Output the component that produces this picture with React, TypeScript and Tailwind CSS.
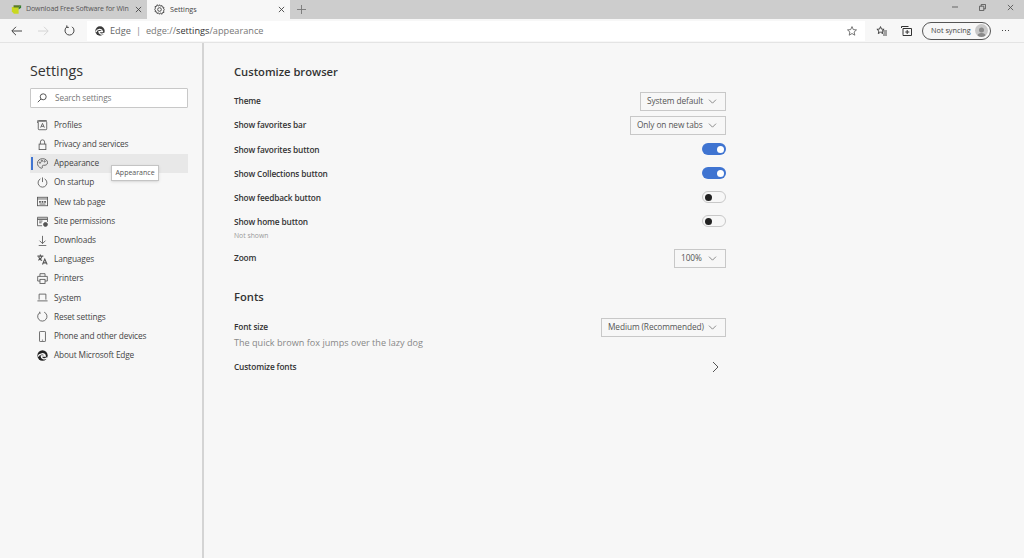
import React from "react";

const S = { fill: "none", stroke: "currentColor", strokeWidth: 1, width: 11, height: 11 } as const;

function EdgeLogo({ size = 11, color = "#3a3a3a", gap = "#ffffff" }: { size?: number; color?: string; gap?: string }) {
  return (
    <svg width={size} height={size} viewBox="0 0 16 16">
      <circle cx="8" cy="8" r="7.500" fill={color} />
      <path
        d="M1.500 9.500C3 5 11 3.800 12 8.800H6.300C6 12.500 10.500 14.200 15 11.500"
        fill="none"
        stroke={gap}
        strokeWidth="2"
      />
    </svg>
  );
}

const navIcons: Record<string, React.ReactNode> = {
  Profiles: (
    <svg viewBox="0 0 13 13" {...S}>
      <rect x="1.500" y="1.500" width="10" height="10" rx="1" />
      <path d="M.5 3.500v-2a1 1 0 0 1 1-1h10" />
      <path d="M4.300 9 6.500 4l2.200 5M5 7.500h3" />
    </svg>
  ),
  "Privacy and services": (
    <svg viewBox="0 0 13 13" {...S}>
      <rect x="2.500" y="6" width="8" height="6.500" />
      <path d="M4 6V3.500a2.500 2.500 0 0 1 5 0V6" />
    </svg>
  ),
  Appearance: (
    <svg viewBox="0 0 13 13" {...S}>
      <path d="M6.500.8C3 .8.500 3.200.500 6.300c0 2.700 2 4.900 4.400 5.700 1.200.4 1.700-.4 1.400-1.500-.3-1.200.3-2 1.500-1.900 2.200.2 4.700-.6 4.700-3C12.500 2.600 9.800.8 6.500.8Z" />
      <circle cx="3.500" cy="5.500" r=".8" />
      <circle cx="5.800" cy="3.300" r=".8" />
      <circle cx="9" cy="4" r=".8" />
    </svg>
  ),
  "On startup": (
    <svg viewBox="0 0 13 13" {...S}>
      <path d="M4 2.200a5.200 5.200 0 1 0 5 0M6.500 .5v5.500" />
    </svg>
  ),
  "New tab page": (
    <svg viewBox="0 0 13 13" {...S}>
      <rect x=".5" y="1.500" width="12" height="10" />
      <path d="M.5 3.500h12" />
      <path d="M2.500 7h2M5.500 7h2M8.500 7h2" strokeWidth="2" />
      <path d="M3 9.500h7" />
    </svg>
  ),
  "Site permissions": (
    <svg viewBox="0 0 13 13" {...S}>
      <path d="M6 11.500H.5v-10h12V7" />
      <path d="M.5 3.800h12" strokeWidth="1.500" />
      <path d="M2.500 6h4M2.500 8h3" />
      <circle cx="10" cy="10" r="2.300" fill="currentColor" />
    </svg>
  ),
  Downloads: (
    <svg viewBox="0 0 13 13" {...S}>
      <path d="M6.500 1v9M3 6.700l3.500 3.500L10 6.700M2 12.500h9" />
    </svg>
  ),
  Languages: (
    <svg viewBox="0 0 13 13" {...S}>
      <path d="M.5 2.500h7M4 .5v2M1.500 7.500C4 6.500 5.500 4.500 6 2.500M2 3.500c.7 2 2 3.500 4 4.300" strokeWidth="1.300" />
      <path d="M6.500 12.500 9.200 6l2.800 6.500M7.500 10.500h3.500" strokeWidth="1.300" />
    </svg>
  ),
  Printers: (
    <svg viewBox="0 0 13 13" {...S}>
      <path d="M3.500 4V.8h6V4M3.500 9.500H.8V4h11.400v5.500H9.500" />
      <rect x="3.500" y="7.500" width="6" height="4.800" />
    </svg>
  ),
  System: (
    <svg viewBox="0 0 13 13" {...S}>
      <path d="M2.500 9V2.500h8V9M.5 10.500h12" />
    </svg>
  ),
  "Reset settings": (
    <svg viewBox="0 0 13 13" {...S}>
      <path d="M8.500 1.400a5.500 5.500 0 1 1-5 .3M3.300.8l.3 2.800" />
    </svg>
  ),
  "Phone and other devices": (
    <svg viewBox="0 0 13 13" {...S}>
      <rect x="3" y=".5" width="7" height="12" rx=".8" />
      <path d="M5.800 10.800h1.400" />
    </svg>
  ),
  "About Microsoft Edge": <EdgeLogo size={11} color="#222" gap="#f7f7f7" />,
};

const navItems = Object.keys(navIcons);

function Chevron() {
  return (
    <svg width="9" height="5" viewBox="0 0 10 6" fill="none" stroke="#777" strokeWidth="1">
      <path d="M.8.800 5 5l4.200-4.200" />
    </svg>
  );
}

function Select({ label, width }: { label: string; width: string }) {
  return (
    <div
      className={`flex h-[19px] items-center justify-between border border-[#c8c8c8] pl-[6px] pr-[8px] text-[8.300px] font-normal tracking-[-0.1px] text-[#555] ${width}`}
    >
      <span>{label}</span>
      <Chevron />
    </div>
  );
}

function Toggle({ on }: { on?: boolean }) {
  return on ? (
    <div className="flex h-3 w-6 items-center justify-end rounded-full bg-[#3f74d1] pr-[2px]">
      <div className="h-[7px] w-[7px] rounded-full bg-white" />
    </div>
  ) : (
    <div className="flex h-3 w-6 items-center rounded-full border border-[#c8c8c8] pl-[2px]">
      <div className="h-[7px] w-[7px] rounded-full bg-[#222]" />
    </div>
  );
}

function Row({
  label,
  children,
  className = "h-6",
  labelClass = "pt-[2px]",
}: {
  label: string;
  children?: React.ReactNode;
  className?: string;
  labelClass?: string;
}) {
  return (
    <div className={`flex items-center justify-between text-[8.300px] font-semibold tracking-[-0.15px] text-[#333] ${className}`}>
      <span className={labelClass}>{label}</span>
      {children}
    </div>
  );
}

export default function App() {
  return (
    <div
      className="flex h-[558px] w-[1024px] flex-col overflow-hidden bg-[#f7f7f7] text-[#333]"
      style={{ fontFamily: '"Open Sans", "Noto Sans", sans-serif' }}
    >
      {/* Tab strip */}
      <div className="flex h-[19px] items-stretch bg-[#cdcdcd] pl-[4px]">
        <div className="flex w-[143px] items-center pl-[7px] pr-[5px] text-[7px] tracking-[-0.1px] text-[#555]">
          <svg width="11" height="11" viewBox="0 0 13 12" className="shrink-0">
            <path fill="#c9d820" d="M1 3h8v8H3.500L1 8.500Z" />
            <path fill="#5a7a2a" d="M3 1h9L9 3.500H3Z" />
            <path fill="#2e7d32" d="M9 3.500 12 1v3l-3 2Z" />
          </svg>
          <span className="ml-[4px] whitespace-nowrap">Download Free Software for Win</span>
          <span className="ml-auto text-[#444]">
            <svg width="7" height="7" viewBox="0 0 8 8" stroke="currentColor" strokeWidth="1">
              <path d="M1 1l6 6M7 1 1 7" />
            </svg>
          </span>
        </div>
        <div className="flex w-[143px] items-center bg-[#f7f7f7] pl-[7px] pr-[5px] text-[7.200px] text-[#444]">
          <svg width="11" height="11" viewBox="0 0 12 12" fill="none" stroke="#444" strokeWidth="1">
            <circle cx="6" cy="6" r="2" />
            <path d="M6 .8 7 2.300l1.700-.6.4 1.700 1.800.3-.5 1.700L11.300 6l-.9 1.500.5 1.700-1.800.3-.4 1.700L7 9.700 6 11.200 5 9.700l-1.700.6-.4-1.700-1.800-.3.500-1.700L.7 6l.9-1.500-.5-1.700 1.800-.3.4-1.700L5 2.300Z" />
          </svg>
          <span className="ml-[5px]">Settings</span>
          <span className="ml-auto text-[#444]">
            <svg width="7" height="7" viewBox="0 0 8 8" stroke="currentColor" strokeWidth="1">
              <path d="M1 1l6 6M7 1 1 7" />
            </svg>
          </span>
        </div>
        <div className="flex w-[22px] items-center justify-center text-[#777]">
          <svg width="9" height="9" viewBox="0 0 10 10" stroke="currentColor" strokeWidth="1">
            <path d="M5 0v10M0 5h10" />
          </svg>
        </div>
        <div className="ml-auto flex items-center gap-[21px] pb-[5px] pr-[10px] text-[#555]">
          <svg width="6" height="6" viewBox="0 0 7 7" stroke="currentColor" strokeWidth="1">
            <path d="M0 3.500h7" />
          </svg>
          <svg width="7" height="7" viewBox="0 0 8 8" fill="none" stroke="currentColor" strokeWidth="1">
            <path d="M.5 2.500h5v5h-5zM2.500 2.500v-2h5v5h-2" />
          </svg>
          <svg width="7" height="7" viewBox="0 0 8 8" stroke="currentColor" strokeWidth="1">
            <path d="M1 1l6 6M7 1 1 7" />
          </svg>
        </div>
      </div>

      {/* Toolbar */}
      <div className="flex h-[24px] items-center border-b border-[#e4e4e4] bg-[#f7f7f7]">
        <div className="flex w-[87px] items-center pl-[11px] text-[#444]">
          <svg width="11" height="10" viewBox="0 0 11 10" fill="none" stroke="currentColor" strokeWidth="1">
            <path d="M11 5H1M5 .8.800 5 5 9.200" />
          </svg>
          <svg width="11" height="10" viewBox="0 0 11 10" fill="none" stroke="#d4d4d4" strokeWidth="1" className="ml-[16px]">
            <path d="M0 5h10M6 .8 10.200 5 6 9.200" />
          </svg>
          <svg width="11" height="11" viewBox="0 0 11 11" fill="none" stroke="currentColor" strokeWidth="1" className="ml-[15px]">
            <path d="M3 1.800a4.500 4.500 0 1 0 5 0M2.800.4v2h2" />
          </svg>
        </div>
        <div className="flex h-[20px] w-[778px] items-center bg-white pl-[8px] pr-[8px] text-[9.200px]">
          <EdgeLogo size={10} />
          <span className="ml-[5px] text-[#666]">Edge</span>
          <span className="mx-[5px] text-[#888]">|</span>
          <span className="text-[#777]">
            edge://<span className="text-[#333]">settings</span>/appearance
          </span>
          <svg width="10" height="10" viewBox="0 0 10 10" fill="none" stroke="#555" strokeWidth=".8" className="ml-auto">
            <path d="m5 .6 1.300 3 3.200.3-2.400 2.100.7 3.200L5 7.500 2.200 9.200l.7-3.200L.5 3.900l3.200-.3Z" />
          </svg>
        </div>
        <div className="flex flex-1 items-center pl-[11px] text-[#333]">
          <svg width="11" height="10" viewBox="0 0 11 10" fill="none" stroke="currentColor" strokeWidth=".9">
            <path d="m4.500.6 1 2.500 2.600.2-2 1.700.6 2.600-2.200-1.400-2.200 1.400.6-2.600-2-1.700 2.600-.2ZM7 5h4M7.500 7h3.500M7 9h4" />
          </svg>
          <svg width="11" height="11" viewBox="0 0 11 11" fill="none" stroke="currentColor" strokeWidth="1" className="ml-[14px]">
            <path d="M.5 3V1.500h7M2 9.500v-6h8.500v7H2ZM6.200 5v4M4.300 7h4" />
          </svg>
          <div className="ml-[10px] flex h-[18px] w-[69px] items-center justify-between rounded-full border border-[#555] bg-[#f7f7f7] pl-[8px] pr-[2px] text-[7.300px] text-[#444]">
            <span>Not syncing</span>
            <div className="flex h-[13px] w-[13px] items-end justify-center overflow-hidden rounded-full bg-[#c8c8c8]">
              <svg width="11" height="11" viewBox="0 0 11 11" fill="#8a8a8a">
                <circle cx="5.500" cy="4" r="2.500" />
                <path d="M1 11c0-2.500 2-4 4.500-4S10 8.500 10 11Z" />
              </svg>
            </div>
          </div>
          <span className="ml-[11px] flex gap-[2px]">
            <i className="h-[1px] w-[1px] bg-[#444]" />
            <i className="h-[1px] w-[1px] bg-[#444]" />
            <i className="h-[1px] w-[1px] bg-[#444]" />
          </span>
        </div>
      </div>

      <div className="flex min-h-0 flex-1">
        {/* Sidebar */}
        <aside className="w-[204px] shrink-0 border-r-2 border-[#d4d4d4] pt-[18px]">
          <div className="pl-[30px] text-[14.300px] leading-[20px] text-[#333] font-medium">Settings</div>
          <div className="ml-[30px] mt-[7px] flex h-[20px] w-[158px] items-center rounded-[1px] border border-[#c8c8c8] bg-white pl-[6px] text-[8.200px] tracking-[-0.1px] text-[#777]">
            <svg width="10" height="10" viewBox="0 0 10 10" fill="none" stroke="#444" strokeWidth=".9">
              <circle cx="6.200" cy="3.800" r="3" />
              <path d="M4 6 .8 9.200" />
            </svg>
            <span className="ml-[8px]">Search settings</span>
          </div>
          <nav className="ml-[30px] mt-[7.500px] w-[158px]">
            {navItems.map((item) => {
              const active = item === "Appearance";
              return (
                <div
                  key={item}
                  className={`relative flex h-[19.200px] items-center pl-[7px] text-[8.300px] tracking-[-0.15px] text-[#444] ${active ? "bg-[#e8e8e8]" : ""}`}
                >
                  {active && <div className="absolute left-[1px] top-[3px] h-[13px] w-[2px] bg-[#3f74d1]" />}
                  <span className="flex w-[17px] items-center text-[#555]">{navIcons[item]}</span>
                  <span>{item}</span>
                  {active && (
                    <div className="absolute left-[81px] top-[11.500px] flex h-[16px] w-[48px] items-center justify-center border border-[#c4c4c4] bg-white text-[7px] tracking-normal text-[#555] shadow-sm">
                      Appearance
                    </div>
                  )}
                </div>
              );
            })}
          </nav>
        </aside>

        {/* Main */}
        <main className="w-[552px] pl-[30px] pt-[20px]">
          <div className="w-[492px]">
            <h2 className="text-[11.200px] leading-[17px] font-semibold text-[#333]">Customize browser</h2>
            <div className="mt-[9px]">
              <Row label="Theme" className="h-[24px]" labelClass="">
                <Select label="System default" width="w-[86px]" />
              </Row>
              <Row label="Show favorites bar" className="h-[24px]" labelClass="">
                <Select label="Only on new tabs" width="w-[96px]" />
              </Row>
              <Row label="Show favorites button">
                <Toggle on />
              </Row>
              <Row label="Show Collections button">
                <Toggle on />
              </Row>
              <Row label="Show feedback button">
                <Toggle />
              </Row>
              <Row label="Show home button">
                <Toggle />
              </Row>
              <div className="-mt-[2px] text-[6.800px] leading-[10px] text-[#999]">Not shown</div>
              <Row label="Zoom" className="mt-[5px] h-[24px]" labelClass="">
                <Select label="100%" width="w-[52px]" />
              </Row>
            </div>
            <h2 className="mt-[18px] text-[11.200px] leading-[17px] font-semibold text-[#333]">Fonts</h2>
            <Row label="Font size" className="mt-[13px] h-[19px]" labelClass="">
              <Select label="Medium (Recommended)" width="w-[125px]" />
            </Row>
            <div className="text-[9.100px] leading-[12px] text-[#888]">The quick brown fox jumps over the lazy dog</div>
            <Row label="Customize fonts" className="mt-[6px] h-[24px]" labelClass="">
              <svg width="7" height="12" viewBox="0 0 7 12" fill="none" stroke="#555" strokeWidth="1" className="mr-[7px]">
                <path d="m1 1 5 5-5 5" />
              </svg>
            </Row>
          </div>
        </main>
      </div>
    </div>
  );
}
